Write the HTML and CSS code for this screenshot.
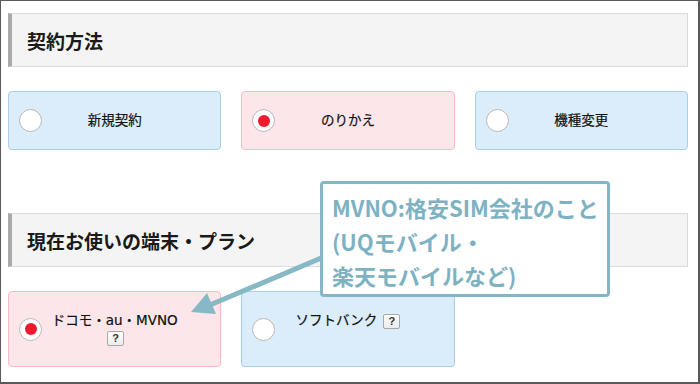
FILE: index.html
```html
<!DOCTYPE html>
<html lang="ja">
<head>
<meta charset="utf-8">
<link rel="stylesheet" href="styles.css">
</head>
<body>
<div class="frame">
  <h2 class="section-title">契約方法</h2>
  <div class="choices first">
    <div class="choice blue"><span class="radio"></span><span class="label">新規契約</span></div>
    <div class="choice pink"><span class="radio checked"></span><span class="label">のりかえ</span></div>
    <div class="choice blue"><span class="radio"></span><span class="label">機種変更</span></div>
  </div>
  <h2 class="section-title second">現在お使いの端末・プラン</h2>
  <div class="choices">
    <div class="choice pink"><span class="radio checked"></span><span class="label">ドコモ・au・MVNO<br><span class="help">?</span></span></div>
    <div class="choice blue"><span class="radio"></span><span class="label">ソフトバンク <span class="help">?</span></span></div>
  </div>

  <svg class="arrow" width="700" height="384" viewBox="0 0 700 384">
    <line x1="326" y1="256" x2="210" y2="305" stroke="#86b8c6" stroke-width="5"/>
    <polygon points="191,312 207,293 216,314" fill="#86b8c6"/>
  </svg>
  <div class="callout">MVNO:格安SIM会社のこと<br>(UQモバイル・<br>楽天モバイルなど)</div>
</div>
</body>
</html>
```
FILE: styles.css
```css
* { box-sizing: border-box; }
html, body { margin: 0; padding: 0; background: #fff; }
body { font-family: "Noto Sans CJK JP", "Noto Sans", sans-serif; color: #222; }

.frame {
  position: relative;
  width: 700px;
  height: 384px;
  border: 1px solid #5a5a5a;
  border-right-width: 2px;
  border-bottom-width: 2px;
  padding: 12px 10px 0 7px;
  overflow: hidden;
}

.section-title {
  margin: 0;
  height: 54px;
  display: flex;
  align-items: center;
  padding-left: 15px;
  background: #f4f4f4;
  border: 1px solid #dcdcdc;
  border-left: 4px solid #a9a9a9;
  font-size: 19px;
  font-weight: 700;
  color: #1a1a1a;
}
.section-title.second { margin-top: 63px; }

.choices {
  display: grid;
  grid-template-columns: repeat(3, 1fr);
  gap: 20px;
  margin-top: 24px;
}

.choice {
  display: grid;
  grid-template-columns: 1fr;
  border: 1px solid;
  border-radius: 4px;
}
.choice.blue { background: #dbedfb; border-color: #aacde8; }
.choice.pink { background: #fde6e9; border-color: #f6bcc3; }

.radio, .label { grid-area: 1 / 1; }

.radio {
  justify-self: start;
  align-self: center;
  margin-left: 10px;
  width: 23px;
  height: 23px;
  border-radius: 50%;
  background: #fff;
  border: 1px solid #b8b8b8;
  display: flex;
  align-items: center;
  justify-content: center;
}
.radio.checked::after {
  content: "";
  width: 12px;
  height: 12px;
  border-radius: 50%;
  background: #ef1b2d;
}

.label {
  justify-self: center;
  padding: 20px 30px;
  font-family: "DejaVu Sans", "Noto Sans CJK JP", sans-serif;
  font-size: 13.5px;
  line-height: 17px;
  text-align: center;
  color: #111;
  white-space: nowrap;
  -webkit-text-stroke: 0.2px #111;
}

.help {
  display: inline-block;
  width: 17px;
  height: 15px;
  line-height: 13px;
  border: 1px solid #a8a8a8;
  border-radius: 2px;
  background: linear-gradient(#ffffff, #ececec);
  font-family: "Liberation Sans", sans-serif;
  font-size: 11px;
  font-weight: 700;
  color: #333;
  text-align: center;
  vertical-align: middle;
  margin-left: 2px;
  -webkit-text-stroke: 0;
}

.arrow {
  position: absolute;
  left: -1px;
  top: -1px;
  pointer-events: none;
}

.callout {
  position: absolute;
  left: 319px;
  top: 180px;
  width: 290px;
  height: 116px;
  background: #fff;
  border: 3px solid #84b6c5;
  border-radius: 4px;
  padding: 6px 4px 2px 9px;
  font-size: 22px;
  line-height: 34px;
  font-weight: 700;
  color: #7eb2c3;
  white-space: nowrap;
}
```
